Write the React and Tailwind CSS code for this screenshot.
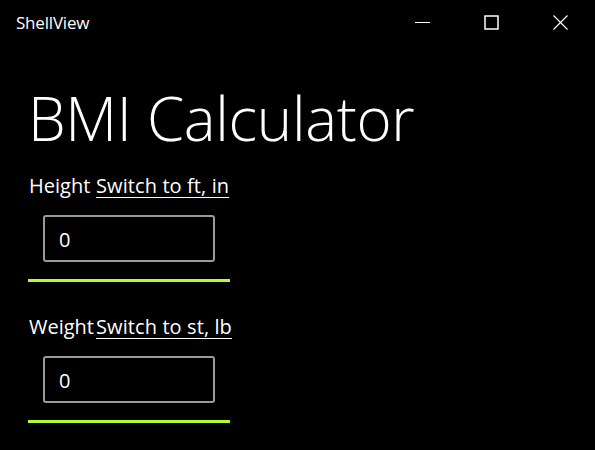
import { useState } from 'react';

function CaptionButtons() {
  return (
    <div className="flex h-full">
      <div className="w-[69px] h-full flex items-center justify-center">
        <svg width="15" height="15" viewBox="0 0 15 15">
          <path d="M0 7.5h15" stroke="white" strokeWidth="1" />
        </svg>
      </div>
      <div className="w-[69px] h-full flex items-center justify-center">
        <svg width="15" height="15" viewBox="0 0 15 15">
          <rect x="1" y="1" width="13" height="13" fill="none" stroke="white" strokeWidth="1.5" />
        </svg>
      </div>
      <div className="w-[69px] h-full flex items-center justify-center">
        <svg width="15" height="15" viewBox="0 0 15 15">
          <path d="M0.5 0.5l14 14M14.5 0.5l-14 14" stroke="white" strokeWidth="1.2" />
        </svg>
      </div>
    </div>
  );
}

function UnitField({ label, switchText, value, onChange, first }) {
  return (
    <div className={first ? 'w-[202px] mt-[18px]' : 'w-[202px] mt-[31px]'}>
      <div className="flex text-[20px] leading-[28px] whitespace-nowrap">
        <span className="w-[68px] shrink-0 pl-[1px]">{label}</span>
        <span className="underline underline-offset-[4px] decoration-1 tracking-[0.1px]">{switchText}</span>
      </div>
      <div className="mx-[15px] mt-[15px] h-[47px] border-2 border-[#9a9a9a] rounded-[3px] flex items-center pl-[14px] pt-[2px]">
        <input
          value={value}
          onChange={(e) => onChange(e.target.value)}
          className="bg-transparent outline-none text-white text-[20px] leading-[28px] w-full"
        />
      </div>
      <div className="mt-[17px] h-[3px] bg-[#adff2f]" />
    </div>
  );
}

export default function App() {
  const [height, setHeight] = useState('0');
  const [weight, setWeight] = useState('0');

  return (
    <div className="w-[595px] h-[450px] bg-black text-white overflow-hidden" style={{ fontFamily: '"Open Sans", "Noto Sans", sans-serif' }}>
      <div className="h-[45px] flex items-center justify-between">
        <span className="pl-4 text-[17px] leading-[20px] tracking-[-0.2px]">ShellView</span>
        <CaptionButtons />
      </div>
      <div className="pl-[28px] pt-[37px]">
        <h1 className="text-[60px] leading-[72px] font-[350] tracking-[-0.3px]">BMI Calculator</h1>
        <UnitField first label="Height" switchText="Switch to ft, in" value={height} onChange={setHeight} />
        <UnitField label="Weight" switchText="Switch to st, lb" value={weight} onChange={setWeight} />
      </div>
    </div>
  );
}
